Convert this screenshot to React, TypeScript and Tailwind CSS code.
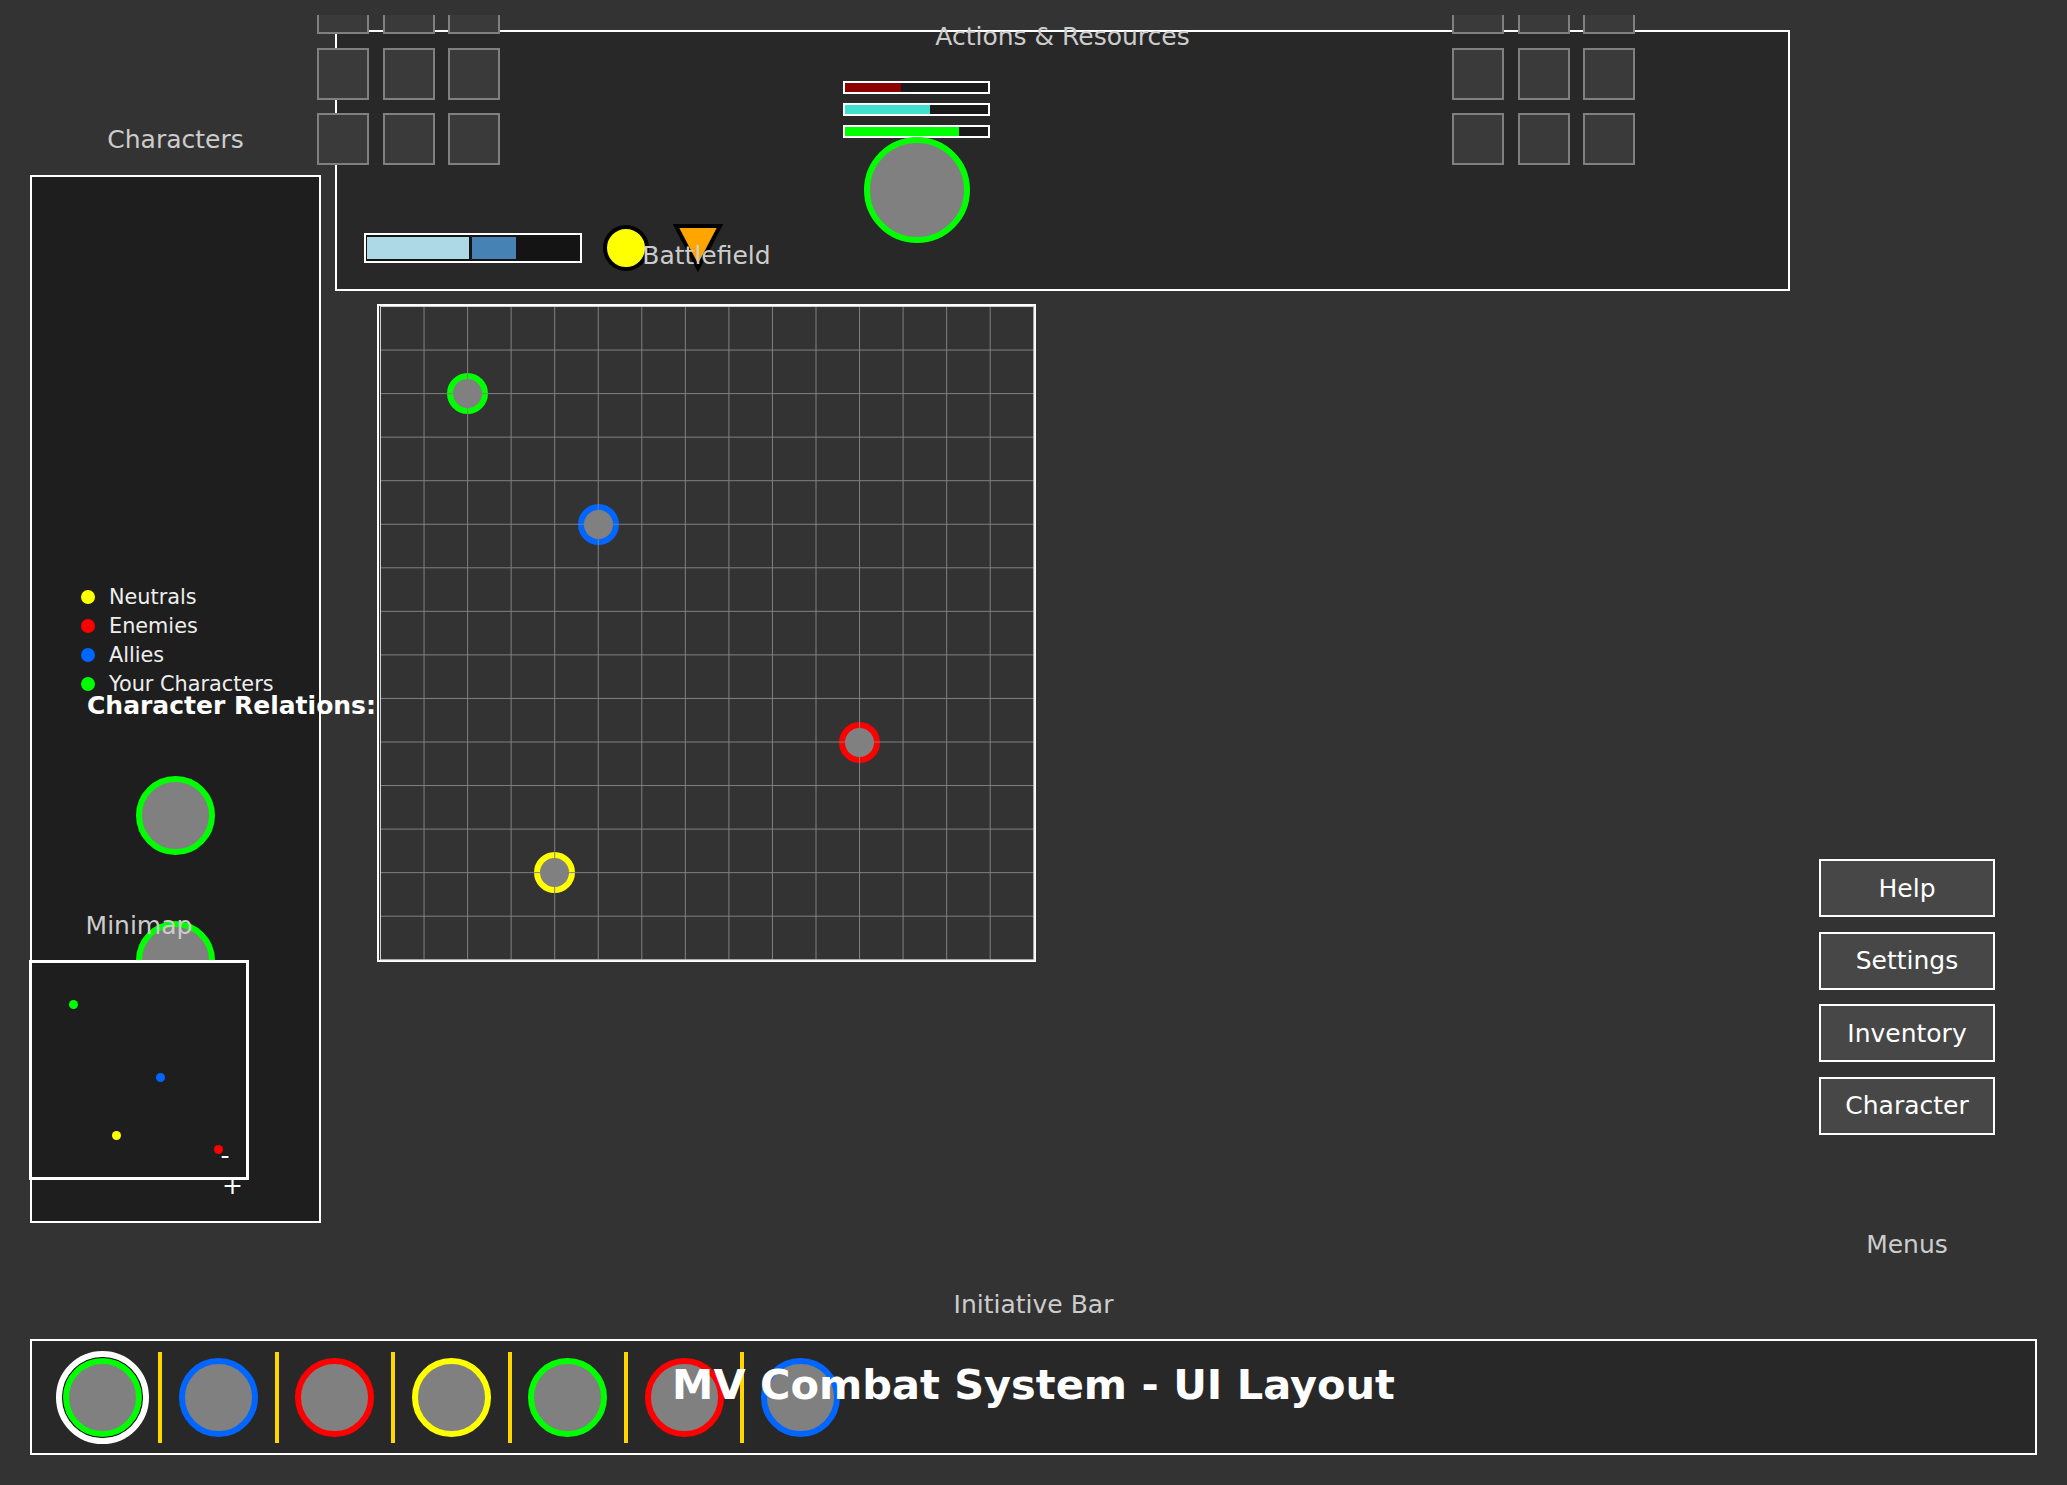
import React from "react";

const GREEN = "#00ff00";
const BLUE = "#0066ff";
const RED = "#ff0000";
const YELLOW = "#ffff00";

function Slot() {
  return <div className="w-[52px] h-[52px] border-2 border-[#808080] bg-[#3a3a3a]" />;
}

function SlotGrid() {
  return (
    <div className="grid grid-cols-[52px_52px_52px] gap-x-[13.5px] gap-y-[13.7px] mt-[-33px]">
      {Array.from({ length: 9 }).map((_, i) => (
        <Slot key={i} />
      ))}
    </div>
  );
}

function Ring({ color, size }: { color: string; size: "sm" | "md" | "lg" }) {
  const cls =
    size === "sm"
      ? "w-[41px] h-[41px] border-[6px]"
      : size === "md"
      ? "w-[79px] h-[79px] border-[6px]"
      : "w-[106px] h-[106px] border-[6px]";
  return <div className={`${cls} rounded-full bg-[#808080] shrink-0`} style={{ borderColor: color }} />;
}

function Label({ children }: { children: React.ReactNode }) {
  return <div className="text-[25px] leading-[25px] text-[#cccccc] whitespace-nowrap text-center">{children}</div>;
}

const CELL = 43.55;
const tokens = [
  { c: 2, r: 2, color: GREEN },
  { c: 5, r: 5, color: BLUE },
  { c: 11, r: 10, color: RED },
  { c: 4, r: 13, color: YELLOW },
];

const minimapDots = [
  { x: 37, y: 37, color: GREEN },
  { x: 124, y: 110, color: BLUE },
  { x: 80, y: 168, color: YELLOW },
  { x: 182, y: 182, color: RED },
];

const legend = [
  { label: "Neutrals", color: YELLOW },
  { label: "Enemies", color: RED },
  { label: "Allies", color: BLUE },
  { label: "Your Characters", color: GREEN },
];

const initiative = [GREEN, BLUE, RED, YELLOW, GREEN, RED, BLUE];

const bars = [
  { color: "#8b0000", w: 56 },
  { color: "#40e0d0", w: 85 },
  { color: GREEN, w: 114 },
];

export default function App() {
  return (
    <div className="relative w-[2067px] h-[1485px] overflow-hidden bg-[#333333] font-['DejaVu_Sans',sans-serif]">
      {/* Characters column */}
      <div className="absolute left-[30px] top-[126.5px] w-[291px] flex flex-col items-center gap-[23.5px]">
        <Label>Characters</Label>
        <div className="w-full h-[1048px] border-2 border-white bg-[#1e1e1e] flex flex-col pt-[405px]">
          <div className="flex flex-col pl-[49px]">
            {legend.map((l) => (
              <div key={l.label} className="h-[29px] flex items-center gap-[14px]">
                <div className="w-[14px] h-[14px] rounded-full shrink-0" style={{ backgroundColor: l.color }} />
                <span className="text-[20.8px] leading-[20px] text-[#eeeeee] whitespace-nowrap">{l.label}</span>
              </div>
            ))}
          </div>
          <div className="ml-[55px] mt-[-5.5px] text-[25px] leading-[25px] font-bold text-white whitespace-nowrap">
            Character Relations:
          </div>
          <div className="flex flex-col items-center gap-[66px] mt-[58.5px]">
            <Ring color={GREEN} size="md" />
            <Ring color={GREEN} size="md" />
          </div>
        </div>
      </div>

      {/* Minimap */}
      <div className="absolute left-[29px] top-[913px] w-[220px] flex flex-col items-center gap-[22px]">
        <Label>Minimap</Label>
        <div className="relative w-[220px] h-[220px] border-[3px] border-white bg-[#1e1e1e]">
          {minimapDots.map((d, i) => (
            <div
              key={i}
              className="absolute w-[9px] h-[9px] rounded-full"
              style={{ left: d.x, top: d.y, backgroundColor: d.color }}
            />
          ))}
          <div className="absolute left-[183px] top-[180px] w-[20px] text-center text-[25px] leading-[25px] text-white">-</div>
          <div className="absolute left-[190px] top-[210px] w-[20px] text-center text-[25px] leading-[25px] text-white">+</div>
        </div>
      </div>

      {/* Top panel: Actions & Resources */}
      <div className="absolute left-[335px] top-[30px] w-[1455px] h-[261px] border-2 border-white bg-[#282828] flex items-start">
        <div className="absolute left-0 right-0 top-[-8.5px]">
          <Label>Actions &amp; Resources</Label>
        </div>
        <div className="flex items-center mt-[190px] ml-[27px]">
          <div className="w-[218px] h-[30px] border-2 border-white bg-[#141414] flex gap-[3px] px-[1px] py-[2px]">
            <div className="w-[102px] h-full bg-[#add8e6]" />
            <div className="w-[44px] h-full bg-[#4682b4]" />
          </div>
          <div className="ml-[21px] w-[46px] h-[46px] rounded-full border-4 border-black bg-[#ffff00]" />
          <svg className="ml-[23px] overflow-visible" width="52" height="52">
            <polygon points="4,4 48,4 26,46" fill="#ffa500" stroke="#000" strokeWidth="4" />
          </svg>
        </div>
        <div className="ml-[119px] mt-[49px] flex flex-col items-center">
          <div className="flex flex-col gap-[9px]">
            {bars.map((b, i) => (
              <div key={i} className="w-[147px] h-[13px] border-2 border-white bg-[#1a1a1a]">
                <div className="h-full" style={{ width: b.w, backgroundColor: b.color }} />
              </div>
            ))}
          </div>
          <div className="mt-[-1px]">
            <Ring color={GREEN} size="lg" />
          </div>
        </div>
      </div>
      <div className="absolute left-[317px] top-[15px] h-[151px] overflow-hidden">
        <SlotGrid />
      </div>
      <div className="absolute left-[1452px] top-[15px] h-[151px] overflow-hidden">
        <SlotGrid />
      </div>

      {/* Battlefield */}
      <div className="absolute left-[377px] top-[242.5px] w-[659px] flex flex-col items-center gap-[36.5px]">
        <Label>Battlefield</Label>
        <div className="relative w-[659px] h-[658px] border-2 border-white bg-[#333333]">
          {tokens.map((t, i) => (
            <div
              key={i}
              className="absolute"
              style={{ left: 1.5 + t.c * CELL - 20.5, top: 0.5 + t.r * CELL - 20.5 }}
            >
              <Ring color={t.color} size="sm" />
            </div>
          ))}
          <svg className="absolute left-[1px] top-[0px] overflow-visible" width="655" height="655">
            {Array.from({ length: 14 }).map((_, j) => {
              const k = j + 1;
              return (
                <g key={k}>
                  <line x1={0.5 + k * CELL} y1={0.5} x2={0.5 + k * CELL} y2={0.5 + 15 * CELL} stroke="#808080" strokeWidth="1" />
                  <line x1={0.5} y1={0.5 + k * CELL} x2={0.5 + 15 * CELL} y2={0.5 + k * CELL} stroke="#808080" strokeWidth="1" />
                </g>
              );
            })}
            <rect x={0.5} y={0.5} width={15 * CELL} height={15 * CELL} fill="none" stroke="#d0d0d0" strokeWidth="1" />
          </svg>
        </div>
      </div>

      {/* Menus */}
      <div className="absolute left-[1819px] top-[859px] w-[176px] flex flex-col items-center gap-[14.6px]">
        {["Help", "Settings", "Inventory", "Character"].map((m) => (
          <div
            key={m}
            className="w-[176px] h-[58px] border-2 border-white bg-[#474747] text-white text-[25px] leading-[25px] flex items-center justify-center"
          >
            {m}
          </div>
        ))}
        <div className="mt-[82.8px]">
          <Label>Menus</Label>
        </div>
      </div>

      {/* Initiative bar */}
      <div className="absolute left-[30px] top-[1291.5px] w-[2007px] flex flex-col items-center gap-[22.5px]">
        <Label>Initiative Bar</Label>
        <div className="relative w-full h-[116px] border-2 border-white bg-[#282828] flex items-center pl-[14px]">
          {initiative.map((c, i) => (
            <React.Fragment key={i}>
              <div className="w-[112.4px] flex items-center justify-center">
                {i === 0 ? (
                  <div className="w-[93px] h-[93px] rounded-full border-[6px] border-white bg-black flex items-center justify-center">
                    <Ring color={c} size="md" />
                  </div>
                ) : (
                  <Ring color={c} size="md" />
                )}
              </div>
              {i < initiative.length - 1 && <div className="w-[4px] h-[91px] bg-[#ffd700]" />}
            </React.Fragment>
          ))}
          <div className="absolute left-0 right-0 top-[23px] text-center text-[41.5px] leading-[41.5px] font-bold text-white whitespace-nowrap">
            MV Combat System - UI Layout
          </div>
        </div>
      </div>
    </div>
  );
}
